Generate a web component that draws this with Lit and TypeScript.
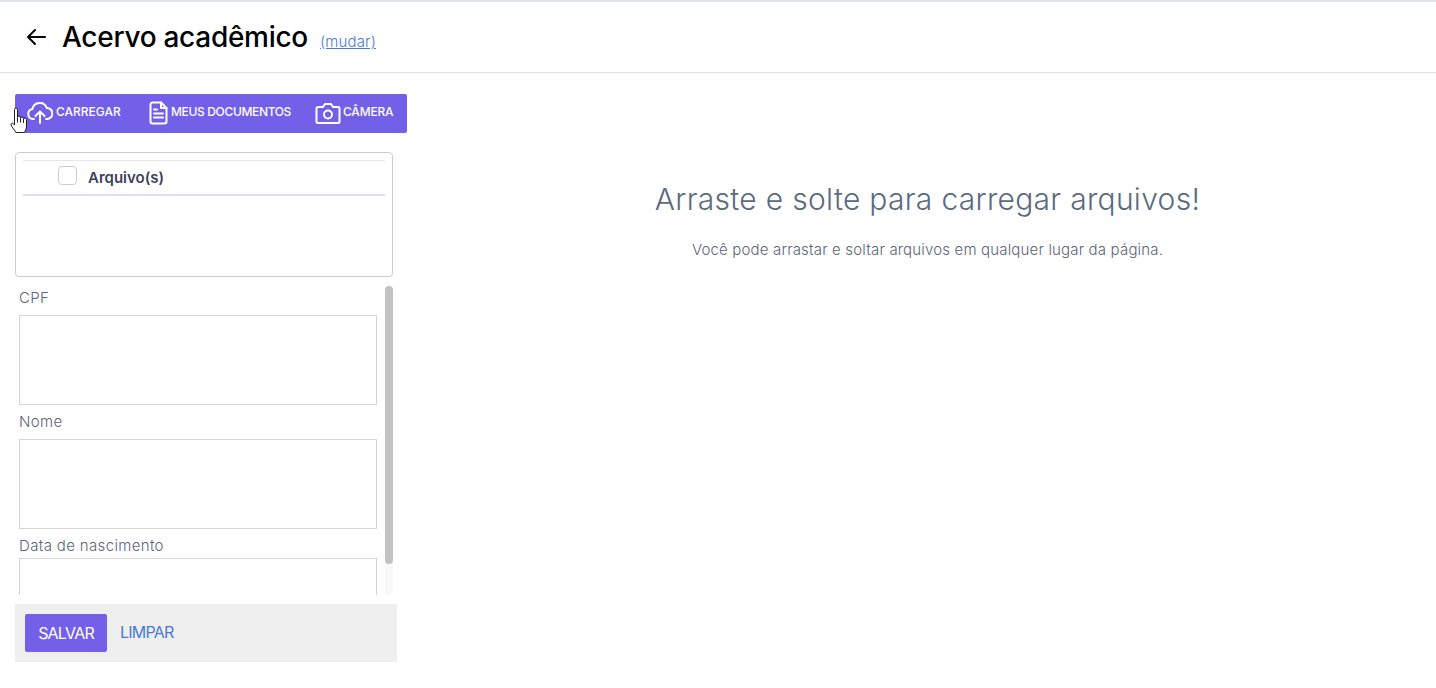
import { LitElement, html, css } from 'lit';
import { customElement } from 'lit/decorators.js';

@customElement('app-root')
export class AppRoot extends LitElement {
  static styles = css`
    :host {
      display: block;
      position: relative;
      width: 1436px;
      height: 688px;
      overflow: hidden;
      background: #fff;
      font-family: Inter, 'Noto Sans', sans-serif;
      color: #5b6577;
    }

    .top-strip {
      height: 2px;
      background: #dfe4ea;
    }

    .header {
      display: flex;
      align-items: center;
      height: 71px;
      padding-left: 25px;
      box-sizing: border-box;
      border-bottom: 1px solid #e2e2e4;
    }

    .back {
      width: 22px;
      height: 22px;
      margin-right: 15px;
      color: #000;
    }

    .title {
      margin: 0;
      font-size: 28px;
      font-weight: 500;
      letter-spacing: -0.28px;
      color: #000;
      white-space: nowrap;
    }

    .change {
      margin: 8px 0 0 12px;
      font-size: 15px;
      font-weight: 300;
      letter-spacing: 0.15px;
      color: #4a7ad8;
      text-decoration: underline;
    }

    .page {
      display: flex;
    }

    .side {
      flex: none;
      width: 392px;
      margin-left: 15px;
      padding-top: 21px;
    }

    .toolbar {
      display: flex;
      align-items: center;
      height: 39px;
      padding: 0 13px;
      box-sizing: border-box;
      background: #7360e8;
      border-radius: 2px;
      color: #fff;
      font-size: 12px;
      font-weight: 500;
      letter-spacing: -0.35px;
    }

    .tool {
      display: flex;
      align-items: center;
      gap: 2px;
      white-space: nowrap;
    }

    .tool svg {
      display: block;
      margin-bottom: 2px;
    }

    .tool span {
      margin-bottom: 5px;
    }

    .tool.upload {
      width: 120px;
      letter-spacing: 0;
    }

    .tool.upload svg {
      margin-left: -1px;
      margin-right: 1px;
    }

    .tool.docs {
      width: 167px;
    }

    .tool.camera {
      letter-spacing: -0.2px;
    }

    .files {
      width: 378px;
      height: 125px;
      margin-top: 19px;
      padding: 7px 7px 0;
      box-sizing: border-box;
      border: 1px solid #ccc;
      border-radius: 4px;
    }

    .files-head {
      display: flex;
      align-items: center;
      height: 36px;
      padding-left: 35px;
      box-sizing: border-box;
      border-top: 1px solid #e4e6ea;
      border-bottom: 2px solid #dee2e6;
      color: #3a4256;
      font-size: 15px;
      font-weight: 600;
    }

    .check {
      width: 19px;
      height: 19px;
      margin: -5px 11px 0 0;
      box-sizing: border-box;
      border: 1px solid #ccc;
      border-radius: 4px;
    }

    .form {
      position: relative;
      width: 378px;
      height: 310px;
      margin-top: 8px;
      overflow: hidden;
    }

    .fields {
      display: flex;
      flex-direction: column;
      padding-left: 4px;
    }

    .label {
      height: 30px;
      padding-top: 4px;
      box-sizing: border-box;
      font-size: 15px;
      font-weight: 300;
      line-height: 18px;
      letter-spacing: 0.35px;
    }

    .input {
      width: 358px;
      height: 90px;
      margin-bottom: 4px;
      box-sizing: border-box;
      border: 1px solid #d4d4d4;
      flex: none;
    }

    .label.tight {
      height: 25px;
    }

    .track {
      position: absolute;
      top: 1px;
      right: 0;
      width: 8px;
      height: 309px;
      border-radius: 4px;
      background: #f8f8f8;
    }

    .thumb {
      height: 278px;
      border-radius: 4px;
      background: #c2c2c2;
    }

    .footer {
      display: flex;
      align-items: center;
      gap: 13px;
      width: 382px;
      height: 58px;
      margin-top: 9px;
      padding-left: 10px;
      box-sizing: border-box;
      background: #efeff0;
    }

    .save {
      width: 82px;
      height: 38px;
      padding: 0 0 1px;
      border: none;
      border-radius: 2px;
      background: #7360e8;
      color: #fff;
      font: 400 16px Inter, sans-serif;
      letter-spacing: -0.8px;
    }

    .clear {
      margin-bottom: 2px;
      color: #4a7ad8;
      font-size: 16px;
      letter-spacing: -0.8px;
    }

    .drop {
      flex: 1;
      padding: 108px 0 0 12px;
      text-align: center;
    }

    .drop h2 {
      margin: 0;
      font-size: 30px;
      font-weight: 300;
      line-height: 36px;
      letter-spacing: 0.3px;
      color: #5b6b80;
    }

    .drop p {
      margin: 24px 0 0;
      font-size: 15px;
      font-weight: 300;
      line-height: 18px;
      letter-spacing: 0.17px;
      color: #5b6577;
    }

    .cursor {
      position: absolute;
      left: 10px;
      top: 107px;
    }
  `;

  render() {
    return html`
      <div class="top-strip"></div>
      <header class="header">
        <svg class="back" viewBox="0 0 22 22" fill="none" stroke="currentColor" stroke-width="2" stroke-linecap="round" stroke-linejoin="round">
          <path d="M20 11H3M10 4l-7 7 7 7" />
        </svg>
        <h1 class="title">Acervo acadêmico</h1>
        <a class="change">(mudar)</a>
      </header>
      <div class="page">
        <aside class="side">
          <div class="toolbar">
            <div class="tool upload">
              <svg width="26" height="24" viewBox="0 0 26 24" fill="none" stroke="#fff" stroke-width="2" stroke-linecap="round" stroke-linejoin="round">
                <path d="M7 18H6a5 5 0 0 1-.6-9.900A7.500 7.500 0 0 1 19.800 7 5.500 5.500 0 0 1 20 18h-1" />
                <path d="M13 22V11M8.500 15l4.500-4.500 4.500 4.500" />
              </svg>
              <span>CARREGAR</span>
            </div>
            <div class="tool docs">
              <svg width="21" height="24" viewBox="0 0 21 24" fill="none" stroke="#fff" stroke-width="2" stroke-linecap="round" stroke-linejoin="round">
                <path d="M13 1.500H4.500a2 2 0 0 0-2 2v17a2 2 0 0 0 2 2h12a2 2 0 0 0 2-2V7z" />
                <path d="M13 1.500V7h5.500M6 8.500h3M6 12.500h9M6 16.500h9" />
              </svg>
              <span>MEUS DOCUMENTOS</span>
            </div>
            <div class="tool camera">
              <svg width="26" height="24" viewBox="0 0 26 24" fill="none" stroke="#fff" stroke-width="2" stroke-linejoin="round">
                <path d="M3 6h5l2-3h6l2 3h5a1.500 1.500 0 0 1 1.500 1.500v13A1.500 1.500 0 0 1 23 22H3a1.500 1.500 0 0 1-1.500-1.500v-13A1.500 1.500 0 0 1 3 6z" />
                <circle cx="13" cy="13.500" r="4" />
              </svg>
              <span>CÂMERA</span>
            </div>
          </div>

          <div class="files">
            <div class="files-head">
              <span class="check"></span>
              <span>Arquivo(s)</span>
            </div>
          </div>

          <div class="form">
            <div class="fields">
              <div class="label">CPF</div>
              <div class="input"></div>
              <div class="label">Nome</div>
              <div class="input"></div>
              <div class="label tight">Data de nascimento</div>
              <div class="input"></div>
            </div>
            <div class="track"><div class="thumb"></div></div>
          </div>

          <div class="footer">
            <button class="save">SALVAR</button>
            <a class="clear">LIMPAR</a>
          </div>
        </aside>

        <main class="drop">
          <h2>Arraste e solte para carregar arquivos!</h2>
          <p>Você pode arrastar e soltar arquivos em qualquer lugar da página.</p>
        </main>
      </div>

      <svg class="cursor" width="19" height="27" viewBox="0 0 19 27" fill="#fff" stroke="#222" stroke-width="1" stroke-linejoin="round">
        <path d="M4.500 2.500a1.500 1.500 0 0 1 3 0V10.500a1.500 1.500 0 0 1 3 0V11.500a1.500 1.500 0 0 1 3 0V12.500a1.500 1.500 0 0 1 3 0V19c0 3-1.500 5-2 6.500H6c-1-2-4-5-5-7.500-.5-1.500 1.200-2.500 2.200-1.500L4.500 18z" />
        <path d="M7.500 10.500v5M10.500 11.500v4M13.500 12.500v3.500" fill="none" />
      </svg>
    `;
  }
}
